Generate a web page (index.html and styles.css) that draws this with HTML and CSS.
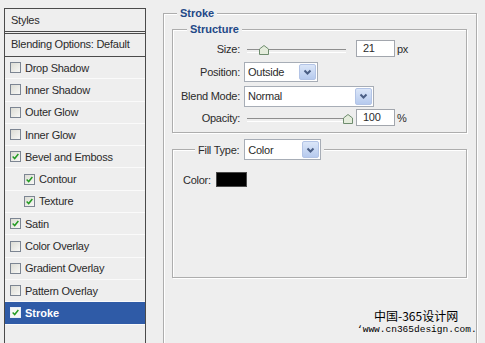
FILE: index.html
```html
<!DOCTYPE html>
<html>
<head>
<meta charset="utf-8">
<link rel="stylesheet" href="styles.css">
</head>
<body>
<div class="page">
  <div class="styles-panel">
    <div class="panel-head">Styles</div>
    <div class="panel-blend">Blending Options: Default</div>
    <ul class="fx-list">
      <li class="fx"><span class="cb"></span>Drop Shadow</li>
      <li class="fx"><span class="cb"></span>Inner Shadow</li>
      <li class="fx"><span class="cb"></span>Outer Glow</li>
      <li class="fx"><span class="cb"></span>Inner Glow</li>
      <li class="fx"><span class="cb"><svg viewBox="0 0 11 11" width="9" height="9"><path d="M2 5.5 L4.5 8 L9 2.5" fill="none" stroke="#229a22" stroke-width="1.8"/></svg></span>Bevel and Emboss</li>
      <li class="fx sub"><span class="cb"><svg viewBox="0 0 11 11" width="9" height="9"><path d="M2 5.5 L4.5 8 L9 2.5" fill="none" stroke="#229a22" stroke-width="1.8"/></svg></span>Contour</li>
      <li class="fx sub"><span class="cb"><svg viewBox="0 0 11 11" width="9" height="9"><path d="M2 5.5 L4.5 8 L9 2.5" fill="none" stroke="#229a22" stroke-width="1.8"/></svg></span>Texture</li>
      <li class="fx"><span class="cb"><svg viewBox="0 0 11 11" width="9" height="9"><path d="M2 5.5 L4.5 8 L9 2.5" fill="none" stroke="#229a22" stroke-width="1.8"/></svg></span>Satin</li>
      <li class="fx"><span class="cb"></span>Color Overlay</li>
      <li class="fx"><span class="cb"></span>Gradient Overlay</li>
      <li class="fx"><span class="cb"></span>Pattern Overlay</li>
      <li class="fx selected"><span class="cb"><svg viewBox="0 0 11 11" width="9" height="9"><path d="M2 5.5 L4.5 8 L9 2.5" fill="none" stroke="#229a22" stroke-width="1.8"/></svg></span>Stroke</li>
    </ul>
  </div>

  <fieldset class="group outer">
    <legend class="title">Stroke</legend>
    <fieldset class="group structure">
      <legend class="title">Structure</legend>
      <div class="row r-size">
        <span class="lbl">Size:</span>
        <div class="slider"><svg class="thumb t-size" viewBox="0 0 10 10" width="10" height="10"><path d="M0.5 4 L5 0.5 L9.5 4 V9.5 H0.5 Z" fill="#e4ecdc" stroke="#6e8c6e"/></svg></div>
        <span class="num">21</span><span class="unit">px</span>
      </div>
      <div class="row r-pos">
        <span class="lbl">Position:</span>
        <div class="select s-pos">Outside<span class="arrow"><svg viewBox="0 0 11 10" width="11" height="10"><path d="M2.5 3.5 L5.5 6.5 L8.5 3.5" fill="none" stroke="#4a5e84" stroke-width="2"/></svg></span></div>
      </div>
      <div class="row r-blend">
        <span class="lbl">Blend Mode:</span>
        <div class="select s-blend">Normal<span class="arrow"><svg viewBox="0 0 11 10" width="11" height="10"><path d="M2.5 3.5 L5.5 6.5 L8.5 3.5" fill="none" stroke="#4a5e84" stroke-width="2"/></svg></span></div>
      </div>
      <div class="row r-op">
        <span class="lbl">Opacity:</span>
        <div class="slider"><svg class="thumb t-op" viewBox="0 0 10 10" width="10" height="10"><path d="M0.5 4 L5 0.5 L9.5 4 V9.5 H0.5 Z" fill="#e4ecdc" stroke="#6e8c6e"/></svg></div>
        <span class="num">100</span><span class="unit">%</span>
      </div>
    </fieldset>

    <fieldset class="group fill">
      <legend class="fill-legend">
        <span class="fill-lbl">Fill Type:</span>
        <span class="select s-fill">Color<span class="arrow"><svg viewBox="0 0 11 10" width="11" height="10"><path d="M2.5 3.5 L5.5 6.5 L8.5 3.5" fill="none" stroke="#4a5e84" stroke-width="2"/></svg></span></span>
      </legend>
      <div class="color-row"><span>Color:</span><span class="swatch"></span></div>
    </fieldset>
  </fieldset>
</div>

<div class="watermark">
  <div class="wm-cn">中国-365设计网</div>
  <div class="wm-url">‘www.cn365design.com.</div>
</div>
</body>
</html>
```

FILE: styles.css
```css
* { box-sizing: border-box; }
html, body { margin: 0; padding: 0; }
body {
  width: 485px;
  height: 343px;
  overflow: hidden;
  position: relative;
  background: #eeeeee;
  font-family: "Liberation Sans", Arial, sans-serif;
  font-size: 11px;
  color: #2b2b2b;
  letter-spacing: -0.25px;
}

.page {
  display: flex;
  align-items: flex-start;
  padding-left: 4px;
  height: 343px;
  overflow: hidden;
}

/* ---------- left styles list ---------- */
.styles-panel {
  flex: none;
  width: 142px;
  height: 345px;
  margin-top: 8px;
  border: 1px solid #4a4a4a;
  border-bottom: none;
}
.panel-head {
  height: 23px;
  border-bottom: 1px solid #4a4a4a;
  padding-left: 6px;
  display: flex;
  align-items: center;
}
.panel-blend {
  height: 24px;
  margin-top: 1px;
  border-top: 1px solid #4a4a4a;
  border-bottom: 1px solid #4a4a4a;
  padding-left: 6px;
  padding-bottom: 2px;
  display: flex;
  align-items: center;
}
.fx-list {
  list-style: none;
  margin: 0;
  padding: 0;
}
.fx {
  height: 22.3px;
  border-bottom: 1px solid #fafafa;
  display: flex;
  align-items: center;
  padding-left: 5px;
}
.fx.sub { padding-left: 19px; }
.cb {
  flex: none;
  width: 11px;
  height: 11px;
  margin-right: 4px;
  border: 1px solid #7c8592;
  background: linear-gradient(135deg, #dcdcd4, #f8f8f6);
  display: flex;
  align-items: center;
  justify-content: center;
}
.fx.selected {
  background: #2f5ba7;
  color: #ffffff;
  font-weight: bold;
  letter-spacing: 0;
}
.fx.selected .cb {
  border-color: #e8eef8;
  background: #f4f6f4;
}

/* ---------- right fieldsets ---------- */
.group {
  margin: 0;
  padding: 0;
  min-width: 0;
  border: 1px solid #adadad;
  box-shadow: inset 1px 1px 0 #ffffff, 1px 1px 0 #ffffff;
}
.title {
  padding: 0 3px;
  line-height: 13px;
  font-weight: bold;
  color: #234887;
  background: #eeeeee;
  letter-spacing: 0;
}
.outer {
  flex: none;
  width: 314px;
  height: 360px;
  margin: 7px 0 0 17px;
}
.outer > .title { margin-left: 13px; }

.structure {
  margin: 3px 9px 0 8px;
  padding: 2px 0 6px 0;
  display: flex;
  flex-direction: column;
  gap: 2px;
}
.structure > .title { margin-left: 14px; }

.row {
  display: flex;
  align-items: center;
}
.r-size { height: 21px; }
.r-pos { height: 22px; }
.r-blend { height: 22px; }
.r-op { height: 17px; }

.lbl {
  flex: none;
  width: 67px;
  text-align: right;
  margin-right: 4px;
}

.slider {
  position: relative;
  flex: none;
  width: 104px;
  height: 100%;
}
.slider::before {
  content: "";
  position: absolute;
  left: 3px;
  right: 2px;
  top: 50%;
  height: 2px;
  border-top: 1px solid #8e8e8e;
  border-bottom: 1px solid #ffffff;
}
.thumb {
  position: absolute;
  top: 50%;
  margin-top: -4px;
}
.t-size { left: 15px; }
.t-op { left: 99px; }

.num {
  flex: none;
  width: 39px;
  height: 17px;
  margin-left: 8px;
  padding-left: 6px;
  line-height: 15px;
  background: #ffffff;
  border: 1px solid #a2a6ad;
}
.unit { margin-left: 2px; }

.select {
  display: flex;
  align-items: center;
  background: #ffffff;
  border: 1px solid #a7adb6;
  padding-left: 3px;
}
.s-pos { width: 74px; height: 20px; }
.s-blend { width: 130px; height: 21px; }
.s-fill { width: 77px; height: 21px; }
.arrow {
  margin-left: auto;
  margin-right: 1px;
  width: 17px;
  height: calc(100% - 2px);
  border: 1px solid #b3c4e6;
  border-radius: 2px;
  background: linear-gradient(#dbe6f8, #b6caee);
  display: flex;
  align-items: center;
  justify-content: center;
}

.fill {
  margin: 6px 9px 0 8px;
  padding: 12px 0 90px 10px;
}
.fill-legend {
  margin-left: 12px;
  padding: 0 3px;
  height: 21px;
  display: flex;
  align-items: center;
  gap: 5px;
  background: #eeeeee;
}
.color-row {
  display: flex;
  align-items: center;
  gap: 5px;
  height: 15px;
}
.swatch {
  width: 31px;
  height: 15px;
  background: #000000;
  border: 1px solid #4a4a4a;
}

/* ---------- watermark overlay ---------- */
.watermark {
  position: absolute;
  left: 357px;
  top: 308px;
  color: #000000;
  letter-spacing: 0;
}
.wm-cn {
  margin-left: 17px;
  font-family: "Noto Sans CJK SC", "Liberation Sans", sans-serif;
  font-size: 12px;
  line-height: 15px;
}
.wm-url {
  font-family: "Liberation Mono", monospace;
  font-size: 9.5px;
  line-height: 13px;
}
```
